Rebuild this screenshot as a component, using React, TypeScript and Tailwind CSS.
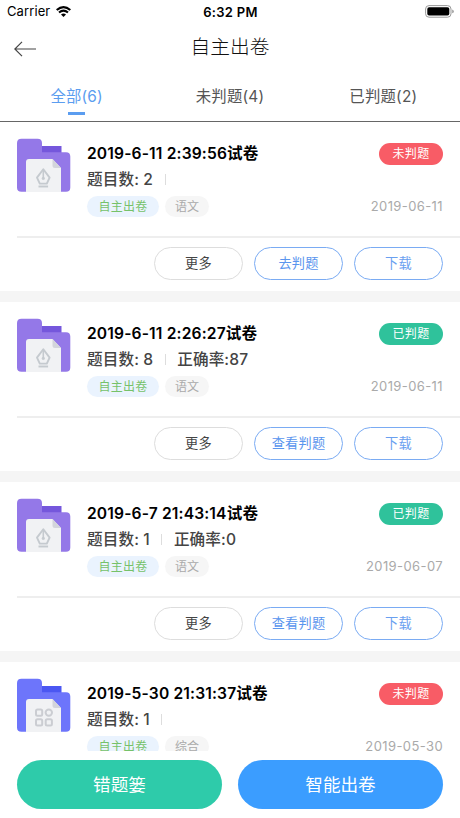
import { useState } from "react";
import clsx from "clsx";

type Paper = {
  id: number;
  title: string;
  count: number;
  rate?: number;
  subject: string;
  date: string;
  judged: boolean;
  kind: "pen" | "grid";
};

const TABS = ["全部(6)", "未判题(4)", "已判题(2)"];

const PAPERS: Paper[] = [
  { id: 1, title: "2019-6-11 2:39:56试卷", count: 2, subject: "语文", date: "2019-06-11", judged: false, kind: "pen" },
  { id: 2, title: "2019-6-11 2:26:27试卷", count: 8, rate: 87, subject: "语文", date: "2019-06-11", judged: true, kind: "pen" },
  { id: 3, title: "2019-6-7 21:43:14试卷", count: 1, rate: 0, subject: "语文", date: "2019-06-07", judged: true, kind: "pen" },
  { id: 4, title: "2019-5-30 21:31:37试卷", count: 1, subject: "综合", date: "2019-05-30", judged: false, kind: "grid" },
];

function FolderIcon({ kind }: { kind: Paper["kind"] }) {
  const pen = kind === "pen";
  return (
    <svg className="h-[54px] w-[54px] shrink-0" viewBox="0 0 54 54" fill="none">
      <path d="M22 8H44.5V17H22Z" fill={pen ? "#7557dc" : "#4b57f2"} />
      <path
        d="M4.5 .7H20.5Q25 .7 25 5V14.2H49Q53.3 14.2 53.3 18.5V49.5Q53.3 53.8 49 53.8H4.5Q0 53.8 0 49.5V5Q0 .7 4.5 .7Z"
        fill={pen ? "#9478e8" : "#6d75fb"}
      />
      <path d="M12 21H35.5L44 30V54H9V24Q9 21 12 21Z" fill="#f1f2f4" />
      <path d="M35.5 21L44 30H38Q35.5 30 35.5 27.5Z" fill="#d3d4db" />
      {pen ? (
        <g stroke="#c5cacf" strokeWidth="1.9">
          <path d="M26.3 31.2L32.6 39.6L29.8 45.6H22.8L20 39.6Z" strokeLinejoin="round" />
          <path d="M26.3 32V40.5" strokeWidth="1.6" />
          <circle cx="26.3" cy="40.4" r="1.2" fill="#c5cacf" strokeWidth=".8" />
          <path d="M21.5 48.5H31.1" strokeWidth="1.9" />
        </g>
      ) : (
        <g stroke="#cbcdd2" strokeWidth="2">
          <rect x="19" y="31.5" width="6.2" height="6.2" rx="1.5" />
          <circle cx="31.8" cy="34.6" r="3.2" />
          <rect x="19" y="41.3" width="6.2" height="6.2" rx="1.5" />
          <rect x="28.7" y="41.3" width="6.2" height="6.2" rx="1.5" />
        </g>
      )}
    </svg>
  );
}

function StatusBar() {
  return (
    <div className="flex h-6 items-center pl-[7px] pr-[6px] text-black">
      <div className="flex flex-1 items-center gap-[6px]">
        <span className="text-[13px] tracking-[0.1px]">Carrier</span>
        <svg className="-mt-[2px] h-[11px] w-[15px]" viewBox="0 0 15 11">
          <path d="M7.5 11L5 8.4Q7.5 6.5 10 8.4Z" />
          <path d="M3 6.5Q7.5 2.9 12 6.5M.7 4Q7.5 -1.6 14.3 4" fill="none" stroke="#000" strokeWidth="2.2" />
        </svg>
      </div>
      <span className="pt-px text-[13px] font-semibold tracking-[0.3px]">6:32 PM</span>
      <div className="flex flex-1 justify-end">
        <svg className="-mt-px h-[13px] w-[29px]" viewBox="0 0 29 13">
          <rect x=".6" y=".6" width="25.4" height="11.6" rx="3.4" fill="none" stroke="#999" />
          <rect x="2.3" y="2.2" width="22" height="8.4" rx="1.8" />
          <path d="M27.3 4.5Q28.7 5 28.7 6.4T27.3 8.3Z" fill="#888" />
        </svg>
      </div>
    </div>
  );
}

function PaperCard({ paper }: { paper: Paper }) {
  const btn = "flex h-[33px] w-[89px] items-center justify-center rounded-full border pt-px text-[13.2px] tracking-[0.2px]";
  return (
    <div className="h-[169px] shrink-0 bg-white">
      <div className="flex h-[114px] pl-[17px] pr-[17px] pt-4">
        <FolderIcon kind={paper.kind} />
        <div className="ml-4 flex-1 pt-[3px]">
          <div className="flex h-[25px] items-center justify-between">
            <h2 className="pt-px text-[15.6px] font-semibold tracking-[0.15px] text-black">{paper.title}</h2>
            <span
              className={clsx(
                "flex h-[22px] w-[64px] items-center justify-center rounded-full text-[12px] tracking-[0.3px] text-white",
                paper.judged ? "bg-[#2fc29b]" : "bg-[#f85c66]"
              )}
            >
              {paper.judged ? "已判题" : "未判题"}
            </span>
          </div>
          <div className="flex h-[25px] items-center pt-[2px] text-[15.6px] font-medium tracking-[0.12px] text-[#444]">
            <span>题目数: {paper.count}</span>
            <span className="mx-[11.5px] h-[11px] w-px bg-[#ddd]" />
            {paper.rate !== undefined && <span>正确率:{paper.rate}</span>}
          </div>
          <div className="mt-[5px] flex h-[21px] items-center text-[12px]">
            <span className="flex h-[21px] w-[72px] items-center justify-center rounded-full bg-[#eaf3fe] pt-px tracking-[0.3px] text-[#76c26a]">
              自主出卷
            </span>
            <span className="ml-[6px] flex h-[21px] w-[44px] items-center justify-center rounded-full bg-[#f6f6f6] pt-px text-[#aaa]">
              {paper.subject}
            </span>
            <span className="ml-auto text-[13px] tracking-[0.4px] text-[#aaa]">{paper.date}</span>
          </div>
        </div>
      </div>
      <div className="ml-[17px] h-[2px] bg-[#eee]" />
      <div className="mt-[9px] flex justify-end gap-[11px] pr-[17px]">
        <button className={clsx(btn, "border-[#ddd] text-[#444]")}>更多</button>
        <button className={clsx(btn, "border-[#7aabf3] text-[#5a95ee]")}>{paper.judged ? "查看判题" : "去判题"}</button>
        <button className={clsx(btn, "border-[#7aabf3] text-[#6aa0f0]")}>下载</button>
      </div>
    </div>
  );
}

export default function App() {
  const [tab, setTab] = useState(0);

  return (
    <div className="flex h-[818px] w-[460px] flex-col overflow-hidden bg-white font-['Inter','Noto_Sans_CJK_SC',sans-serif]">
      <StatusBar />

      {/* Title bar */}
      <header className="grid h-[46px] grid-cols-3 items-center">
        <button className="ml-[14px] mt-[4px]">
          <svg className="h-4 w-[22px]" viewBox="0 0 22 16" fill="none" stroke="#444" strokeWidth="1.2">
            <path d="M22 8H.8M8 .8L.8 8L8 15.2" />
          </svg>
        </button>
        <h1 className="whitespace-nowrap pt-[2px] text-center text-[19.7px] font-light text-[#111]">自主出卷</h1>
      </header>

      {/* Tabs */}
      <div className="flex h-[52px] shrink-0 border-b border-[#666]">
        {TABS.map((label, i) => (
          <button
            key={label}
            onClick={() => setTab(i)}
            className={clsx(
              "flex flex-1 flex-col items-center pt-[15px] text-[15.4px] leading-[24px] tracking-[0.2px]",
              tab === i ? "text-[#5b9df0]" : "text-[#555]"
            )}
          >
            {label}
            {tab === i && <span className="mt-[3px] h-[3px] w-[17px] bg-[#5b9df0]" />}
          </button>
        ))}
      </div>

      {/* Paper list */}
      <div className="flex min-h-0 flex-1 flex-col gap-[11px] overflow-hidden bg-[#f5f5f5]">
        {PAPERS.map((p) => (
          <PaperCard key={p.id} paper={p} />
        ))}
      </div>

      {/* Bottom actions */}
      <div className="flex h-[67px] shrink-0 gap-4 bg-white px-[17px] pt-[9px] text-[17.6px] text-white">
        <button className="h-[49px] flex-1 rounded-full bg-[#2ecbaa] pt-[2px]">错题篓</button>
        <button className="h-[49px] flex-1 rounded-full bg-[#3b9dff] pt-[2px]">智能出卷</button>
      </div>
    </div>
  );
}
